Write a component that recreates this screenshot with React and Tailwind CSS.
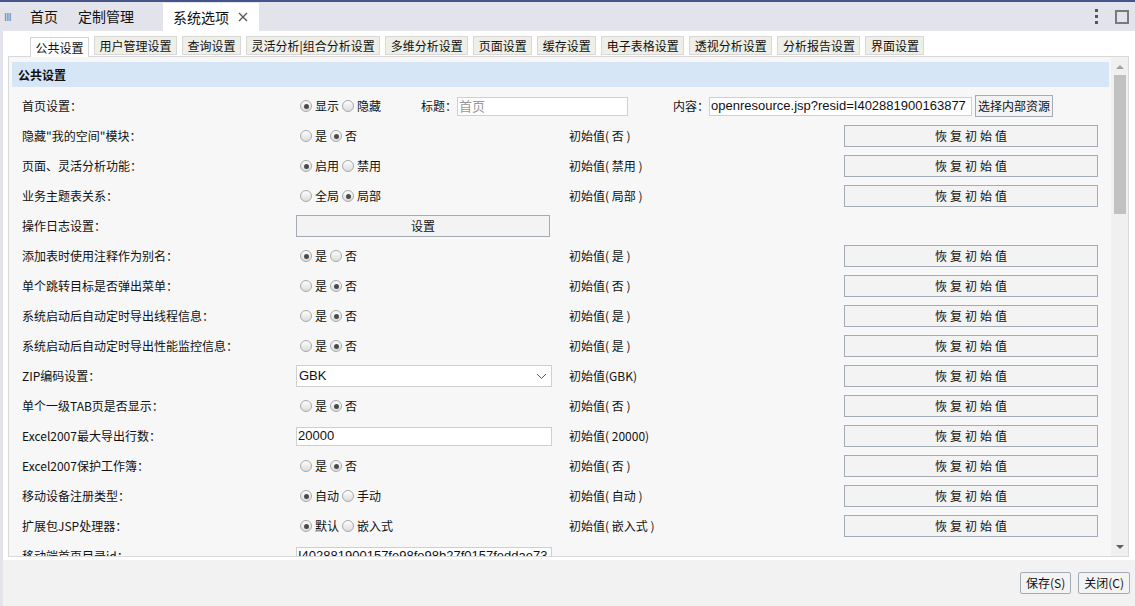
import React from 'react';

const FONT = { fontFamily: '"Noto Sans CJK SC", "Microsoft YaHei", "Liberation Sans", sans-serif' };

const subTabs = [
  '公共设置', '用户管理设置', '查询设置', '灵活分析|组合分析设置', '多维分析设置',
  '页面设置', '缓存设置', '电子表格设置', '透视分析设置', '分析报告设置', '界面设置',
];

const rows = [
  { label: '隐藏"我的空间"模块：', type: 'radio', opts: ['是', '否'], on: 1, init: '初始值( 否 )' },
  { label: '页面、灵活分析功能：', type: 'radio', opts: ['启用', '禁用'], on: 0, init: '初始值( 禁用 )' },
  { label: '业务主题表关系：', type: 'radio', opts: ['全局', '局部'], on: 1, init: '初始值( 局部 )' },
  { label: '操作日志设置：', type: 'button', text: '设置' },
  { label: '添加表时使用注释作为别名：', type: 'radio', opts: ['是', '否'], on: 0, init: '初始值( 是 )' },
  { label: '单个跳转目标是否弹出菜单：', type: 'radio', opts: ['是', '否'], on: 1, init: '初始值( 否 )' },
  { label: '系统启动后自动定时导出线程信息：', type: 'radio', opts: ['是', '否'], on: 1, init: '初始值( 是 )' },
  { label: '系统启动后自动定时导出性能监控信息：', type: 'radio', opts: ['是', '否'], on: 1, init: '初始值( 是 )' },
  { label: 'ZIP编码设置：', type: 'select', value: 'GBK', init: '初始值(GBK)' },
  { label: '单个一级TAB页是否显示：', type: 'radio', opts: ['是', '否'], on: 1, init: '初始值( 否 )' },
  { label: 'Excel2007最大导出行数：', type: 'input', value: '20000', init: '初始值( 20000)' },
  { label: 'Excel2007保护工作簿：', type: 'radio', opts: ['是', '否'], on: 1, init: '初始值( 否 )' },
  { label: '移动设备注册类型：', type: 'radio', opts: ['自动', '手动'], on: 0, init: '初始值( 自动 )' },
  { label: '扩展包JSP处理器：', type: 'radio', opts: ['默认', '嵌入式'], on: 0, init: '初始值( 嵌入式 )' },
  { label: '移动端首页目录id：', type: 'input', value: 'I402881900157fe98fe98b27f0157feddae73' },
];

const Radio = ({ checked }) => (
  <span className="w-[12px] h-[12px] rounded-full border border-[#a9a9a9] bg-gradient-to-b from-[#fdfdfd] to-[#dcdcdc] flex items-center justify-center shrink-0">
    {checked && <span className="w-[5px] h-[5px] rounded-full bg-[#4a4a4a]" />}
  </span>
);

const RadioGroup = ({ opts, on }) => (
  <div className="flex items-center pl-[4px] text-[12px] text-[#111]">
    {opts.map((o, i) => (
      <div key={o} className="flex items-center mr-[3px]">
        <Radio checked={i === on} />
        <span className="ml-[3px]">{o}</span>
      </div>
    ))}
  </div>
);

const RestoreBtn = () => (
  <div className="w-[254px] h-[22px] border border-[#a3abb6] bg-[#f3f3f3] flex items-center justify-center text-[12px] text-[#111] tracking-[3px] pl-[3px]">
    恢复初始值
  </div>
);

const Row = ({ r }) => (
  <div className="h-[30px] flex items-center">
    <div className="w-[284px] pl-[10px] text-[12px] text-[#111] whitespace-nowrap">{r.label}</div>
    <div className="w-[273px] flex items-center">
      {r.type === 'radio' && <RadioGroup opts={r.opts} on={r.on} />}
      {r.type === 'button' && (
        <div className="w-[254px] h-[22px] border border-[#a3abb6] bg-[#f3f3f3] flex items-center justify-center text-[12px] text-[#111]">
          {r.text}
        </div>
      )}
      {r.type === 'select' && (
        <div className="w-[256px] h-[22px] border border-[#cfcfcf] bg-white flex items-center justify-between pl-[2px] pr-[4px] text-[13px] text-[#111]" style={{ fontFamily: '"Liberation Sans", sans-serif' }}>
          <span>{r.value}</span>
          <svg width="11" height="7" viewBox="0 0 11 7"><path d="M1 1l4.5 4.5L10 1" fill="none" stroke="#555" strokeWidth="1" /></svg>
        </div>
      )}
      {r.type === 'input' && (
        <div className="w-[256px] h-[19px] border border-[#cfcfcf] bg-white flex items-center pl-[1px] text-[13px] text-[#111] overflow-hidden whitespace-nowrap" style={{ fontFamily: '"Liberation Sans", sans-serif' }}>
          {r.value}
        </div>
      )}
    </div>
    <div className="w-[275px] text-[12px] text-[#111] whitespace-nowrap">{r.init}</div>
    {r.init && <RestoreBtn />}
  </div>
);

export default function App() {
  return (
    <div className="w-[1135px] h-[606px] bg-white flex flex-col overflow-hidden" style={FONT}>
      {/* top tab bar */}
      <div className="h-[31px] bg-[#e3e3ec] border-t-2 border-[#45558a] flex items-end shrink-0">
        <div className="h-[29px] flex items-center pl-[4px] w-[26px] text-[11px] text-[#777] tracking-[-1px]">III</div>
        <div className="h-[29px] flex items-center text-[14px] text-[#111] px-[4px]">首页</div>
        <div className="h-[29px] flex items-center text-[14px] text-[#111] ml-[16px]">定制管理</div>
        <div className="h-[28px] ml-[29px] w-[96px] bg-white flex items-center pl-[10px] text-[14px] text-[#111]">
          <span>系统选项</span>
          <svg className="ml-[9px]" width="10" height="10" viewBox="0 0 10 10"><path d="M1 1l8 8M9 1l-8 8" stroke="#555" strokeWidth="1.3" /></svg>
        </div>
        <div className="ml-auto h-[29px] flex items-center pr-[6px]">
          <div className="flex flex-col gap-[3px] mr-[17px]">
            <span className="w-[3px] h-[3px] bg-[#555]" />
            <span className="w-[3px] h-[3px] bg-[#555]" />
            <span className="w-[3px] h-[3px] bg-[#555]" />
          </div>
          <span className="w-[14px] h-[14px] border-2 border-[#7a7a7a]" />
        </div>
      </div>

      <div className="flex-1 flex border-l-[3px] border-[#e3e3ec] min-h-0">
        <div className="flex-1 flex flex-col min-w-0">
          {/* sub tabs */}
          <div className="h-[25px] flex items-end pl-[27px] gap-[5px] shrink-0">
            {subTabs.map((t, i) => (
              <div
                key={t}
                className={
                  i === 0
                    ? 'h-[20px] px-[4.5px] flex items-center bg-white border border-b-0 border-[#d4d4d4] text-[12px] text-[#111] relative top-[1px] z-10'
                    : 'h-[19px] px-[4.5px] flex items-center bg-[#efefe8] border border-[#d8d8d8] text-[12px] text-[#111] mb-[1px]'
                }
              >
                {t}
              </div>
            ))}
          </div>

          {/* panel */}
          <div className="ml-[5px] mr-[6px] h-[501px] border border-[#d9d9d9] bg-[#f7f7f7] flex shrink-0 overflow-hidden">
            <div className="flex-1 min-w-0 pl-[3px] pt-[5px] pr-[2px] overflow-hidden">
              <div className="h-[25px] bg-[#d6e6f6] flex items-center pl-[6px] text-[12px] font-bold text-[#111]">公共设置</div>
              <div className="pt-[4px]">
                {/* first row */}
                <div className="h-[30px] flex items-center">
                  <div className="w-[284px] pl-[10px] text-[12px] text-[#111]">首页设置：</div>
                  <RadioGroup opts={['显示', '隐藏']} on={0} />
                  <span className="ml-[37px] text-[12px] text-[#111]">标题：</span>
                  <div className="w-[171px] h-[19px] border border-[#d0d0d0] bg-white flex items-center pl-[1px] text-[13px] text-[#999]">首页</div>
                  <span className="ml-[45px] text-[12px] text-[#111]">内容：</span>
                  <div className="w-[263px] h-[19px] border border-[#d0d0d0] bg-white flex items-center pl-[1px] text-[13px] text-[#111] overflow-hidden whitespace-nowrap" style={{ fontFamily: '"Liberation Sans", sans-serif' }}>
                    openresource.jsp?resid=I402881900163877
                  </div>
                  <div className="ml-[3px] h-[22px] px-[2px] border border-[#a3abb6] bg-[#f3f3f3] flex items-center text-[12px] text-[#111]">选择内部资源</div>
                </div>
                {rows.map((r) => (
                  <Row key={r.label} r={r} />
                ))}
              </div>
            </div>
            {/* scrollbar */}
            <div className="w-[17px] bg-[#f0f0f0] flex flex-col items-center shrink-0">
              <div className="h-[18px] flex items-center justify-center pt-[2px]">
                <span className="w-0 h-0 border-l-[4px] border-r-[4px] border-b-[4px] border-l-transparent border-r-transparent border-b-[#a3a3a3]" />
              </div>
              <div className="w-[12px] h-[139px] bg-[#c1c1c1]" />
              <div className="flex-1" />
              <div className="h-[18px] flex items-center justify-center">
                <span className="w-0 h-0 border-l-[4px] border-r-[4px] border-t-[4px] border-l-transparent border-r-transparent border-t-[#606060]" />
              </div>
            </div>
          </div>

          {/* footer */}
          <div className="flex-1 bg-[#f2f2f2] flex items-center justify-end pr-[5px] gap-[7px] mt-[3px]">
            <div className="h-[22px] px-[5px] border border-[#a3abb6] bg-[#f3f3f3] rounded-[2px] flex items-center text-[12px] text-[#111]">保存(S)</div>
            <div className="h-[22px] px-[5px] border border-[#a3abb6] bg-[#f3f3f3] rounded-[2px] flex items-center text-[12px] text-[#111]">关闭(C)</div>
          </div>
        </div>
      </div>
    </div>
  );
}
